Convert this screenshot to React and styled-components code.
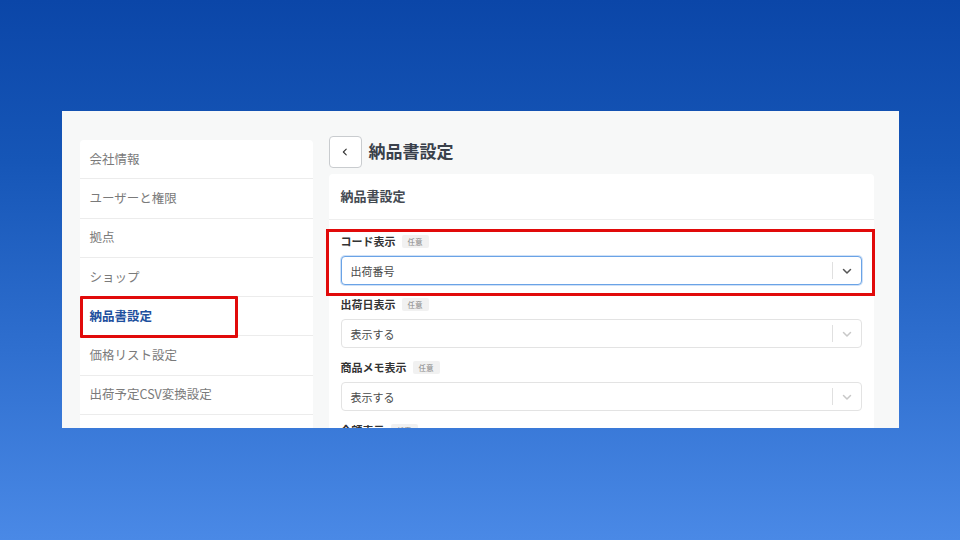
import styled, { createGlobalStyle } from "styled-components";

const GlobalStyle = createGlobalStyle`
  html, body {
    margin: 0;
    padding: 0;
  }
  body {
    font-family: "Noto Sans CJK JP", "Noto Sans", sans-serif;
    background: #0c47a8;
  }
  * {
    box-sizing: border-box;
  }
`;

const menuItems = [
  "会社情報",
  "ユーザーと権限",
  "拠点",
  "ショップ",
  "納品書設定",
  "価格リスト設定",
  "出荷予定CSV変換設定",
  "通知設定",
];

const fields = [
  { label: "コード表示", value: "出荷番号", focused: true },
  { label: "出荷日表示", value: "表示する" },
  { label: "商品メモ表示", value: "表示する" },
  { label: "金額表示", value: "表示する" },
];

const Chevron = ({ color }) => (
  <svg width="12" height="12" viewBox="0 0 24 24" fill="none">
    <path
      d="M5 9l7 7 7-7"
      stroke={color}
      strokeWidth="3"
      strokeLinecap="round"
      strokeLinejoin="round"
    />
  </svg>
);

const App = () => {
  return (
    <Stage>
      <GlobalStyle />
      <Panel>
        <Sidebar>
          {menuItems.map((item) => (
            <MenuItem key={item} active={item === "納品書設定"}>
              {item}
              {item === "納品書設定" && <MenuHighlight />}
            </MenuItem>
          ))}
        </Sidebar>
        <Main>
          <TitleRow>
            <BackButton>
              <svg width="10" height="10" viewBox="0 0 24 24" fill="none">
                <path
                  d="M15 5l-7 7 7 7"
                  stroke="#333"
                  strokeWidth="2.6"
                  strokeLinecap="round"
                  strokeLinejoin="round"
                />
              </svg>
            </BackButton>
            <Title>納品書設定</Title>
          </TitleRow>
          <Card>
            <CardHeader>納品書設定</CardHeader>
            <CardBody>
              {fields.map((f) => (
                <Field key={f.label}>
                  {f.focused && <FieldHighlight />}
                  <LabelRow>
                    <Label>{f.label}</Label>
                    <Badge>任意</Badge>
                  </LabelRow>
                  <Select focused={f.focused}>
                    <SelectValue>{f.value}</SelectValue>
                    <Divider />
                    <Indicator>
                      <Chevron color={f.focused ? "#555" : "#c8c8c8"} />
                    </Indicator>
                  </Select>
                </Field>
              ))}
            </CardBody>
          </Card>
        </Main>
      </Panel>
    </Stage>
  );
};

const Stage = styled.div`
  width: 960px;
  height: 540px;
  overflow: hidden;
  background: linear-gradient(180deg, #0b46a8 0%, #1656b7 30%, #2f6fcf 65%, #4a89e6 100%);
  display: flex;
  justify-content: center;
  padding-top: 111px;
`;

const Panel = styled.div`
  width: 837px;
  height: 317px;
  overflow: hidden;
  background: #f7f8f8;
  display: grid;
  grid-template-columns: 233px 545px;
  column-gap: 16px;
  padding: 28px 0 0 18px;
  align-items: start;
`;

const Sidebar = styled.div`
  margin-top: 1px;
  background: #fff;
  border-radius: 4px;
  display: flex;
  flex-direction: column;
`;

const MenuItem = styled.div`
  position: relative;
  height: 39.3px;
  display: flex;
  align-items: center;
  padding-left: 10px;
  padding-bottom: 2px;
  font-size: 12.5px;
  color: ${(p) => (p.active ? "#1d4f9e" : "#7a7a7a")};
  font-weight: ${(p) => (p.active ? 700 : 400)};
  border-bottom: 1px solid #ececec;
`;

const MenuHighlight = styled.span`
  position: absolute;
  left: 0;
  top: -1px;
  width: 158px;
  height: 42px;
  border: 3px solid #e10a0a;
  border-radius: 1px;
  pointer-events: none;
`;

const Main = styled.div`
  display: flex;
  flex-direction: column;
`;

const TitleRow = styled.div`
  display: flex;
  align-items: center;
  gap: 7px;
  margin-top: -3px;
  height: 32px;
`;

const BackButton = styled.div`
  width: 33px;
  height: 32px;
  border: 1px solid #c9cccf;
  border-radius: 4px;
  background: #fff;
  display: flex;
  align-items: center;
  justify-content: center;
`;

const Title = styled.h1`
  margin: 0 0 3px;
  font-size: 17px;
  font-weight: 700;
  color: #3a414b;
`;

const Card = styled.div`
  margin-top: 6px;
  background: #fff;
  border-radius: 4px;
`;

const CardHeader = styled.div`
  height: 46px;
  display: flex;
  align-items: center;
  padding-left: 12px;
  padding-bottom: 2px;
  font-size: 13px;
  font-weight: 700;
  color: #444a52;
  border-bottom: 1px solid #eeeeee;
`;

const CardBody = styled.div`
  padding: 13px 12px 0;
  display: flex;
  flex-direction: column;
  gap: 11px;
`;

const Field = styled.div`
  position: relative;
  display: flex;
  flex-direction: column;
  gap: 7px;
`;

const FieldHighlight = styled.span`
  position: absolute;
  left: -15px;
  right: -13px;
  top: -4px;
  bottom: -11px;
  border: 3px solid #e10a0a;
  pointer-events: none;
`;

const LabelRow = styled.div`
  display: flex;
  align-items: center;
  gap: 6px;
  height: 16px;
`;

const Label = styled.span`
  font-size: 11px;
  font-weight: 700;
  color: #333;
`;

const Badge = styled.span`
  font-size: 7.5px;
  color: #888;
  background: #f1f1f1;
  padding: 2px 6px;
  border-radius: 2px;
  line-height: 1.2;
`;

const Select = styled.div`
  height: 29px;
  display: flex;
  align-items: center;
  background: #fff;
  border: 1px solid ${(p) => (p.focused ? "#6aa3e6" : "#e3e3e3")};
  box-shadow: ${(p) => (p.focused ? "0 0 0 1px #cfe1f7" : "none")};
  border-radius: 4px;
`;

const SelectValue = styled.span`
  flex: 1;
  padding-left: 9px;
  font-size: 11px;
  color: #4a4a4a;
`;

const Divider = styled.span`
  width: 1px;
  height: 17px;
  background: #e0e0e0;
`;

const Indicator = styled.span`
  width: 28px;
  display: flex;
  align-items: center;
  justify-content: center;
`;

export default App;
